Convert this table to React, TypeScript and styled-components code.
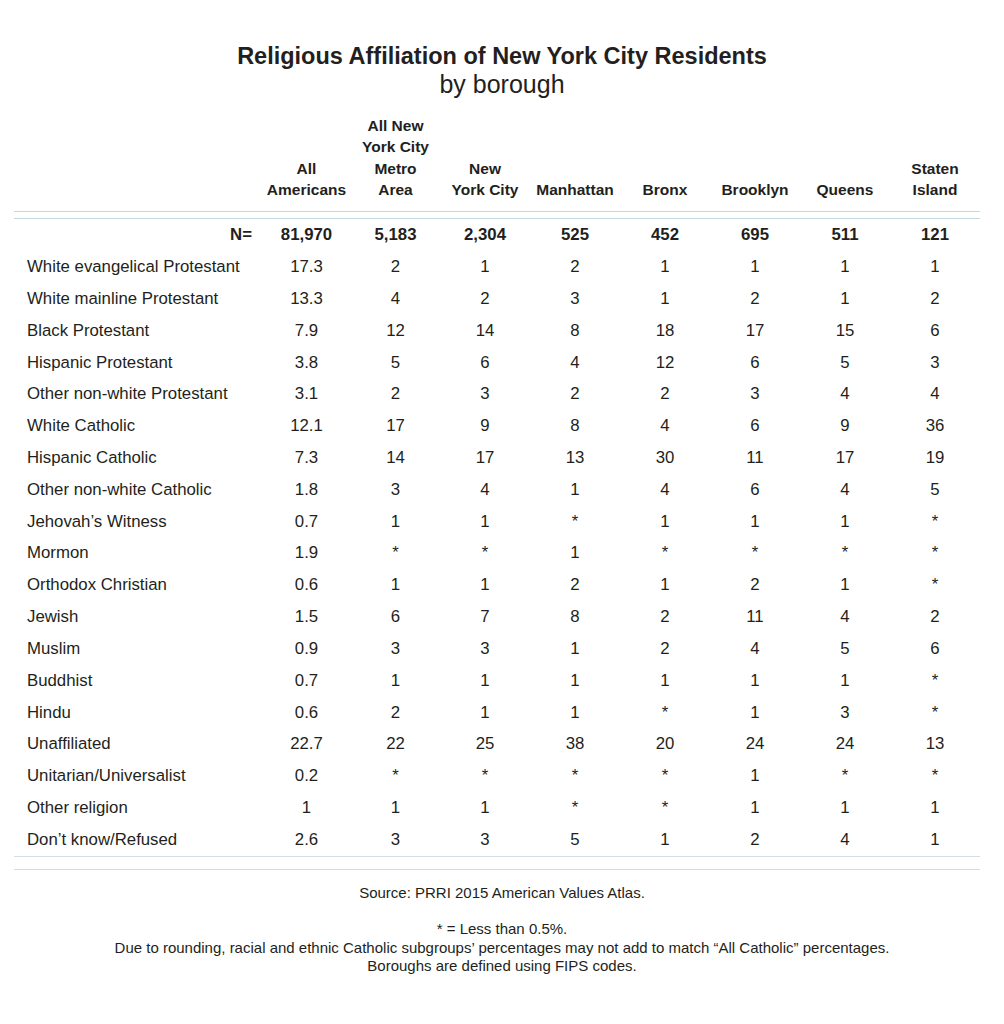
import React from "react";
import styled, { createGlobalStyle } from "styled-components";

const GlobalStyle = createGlobalStyle`
  html, body {
    margin: 0;
    padding: 0;
    background: #ffffff;
  }
  body {
    font-family: "Liberation Sans", Arial, Helvetica, sans-serif;
    color: #231f20;
  }
`;

const Page = styled.div`
  width: 1004px;
  padding-top: 42px;
  box-sizing: border-box;
`;

const Title = styled.h1`
  margin: 0;
  text-align: center;
  font-size: 23.5px;
  font-weight: 700;
  line-height: 28px;
`;

const Subtitle = styled.div`
  text-align: center;
  font-size: 25px;
  font-weight: 400;
  line-height: 28px;
`;

const Table = styled.div`
  margin: 17px 0 0 14px;
  width: 966px;
`;

const Row = styled.div<{ $head?: boolean; $total?: boolean; $last?: boolean }>`
  display: grid;
  grid-template-columns: 248px 89px 89px repeat(6, 90px);
  align-items: ${(p) => (p.$head ? "end" : "center")};
  font-weight: ${(p) => (p.$head || p.$total ? 700 : 400)};
  font-size: ${(p) => (p.$head ? "15.5px" : "16.8px")};
  line-height: ${(p) => (p.$head ? "21.3px" : "31.83px")};
  padding-bottom: ${(p) => (p.$head ? "11px" : "0")};
  border-bottom: ${(p) =>
    p.$head ? "1px solid #c4d9df" : p.$last ? "1px solid #d3dde4" : "none"};
  border-top: ${(p) => (p.$total ? "1px solid #c4d9df" : "none")};
  margin-top: ${(p) => (p.$total ? "6px" : "0")};
`;

const Label = styled.div<{ $right?: boolean }>`
  padding-left: ${(p) => (p.$right ? "0" : "13px")};
  padding-right: ${(p) => (p.$right ? "10px" : "0")};
  text-align: ${(p) => (p.$right ? "right" : "left")};
  white-space: nowrap;
`;

const Cell = styled.div`
  text-align: center;
  white-space: pre-line;
`;

const BottomRule = styled.div`
  margin-top: 12px;
  height: 0;
  border-top: 1px solid #d3dde4;
`;

const Footer = styled.div`
  margin-top: 14px;
  text-align: center;
  font-size: 15px;
  line-height: 18.3px;
  color: #231f20;
`;

const FootLine = styled.div<{ $gap?: boolean }>`
  margin-top: ${(p) => (p.$gap ? "18.3px" : "0")};
`;

const headers = [
  "All\nAmericans",
  "All New\nYork City\nMetro\nArea",
  "New\nYork City",
  "Manhattan",
  "Bronx",
  "Brooklyn",
  "Queens",
  "Staten\nIsland",
];

const totals = ["81,970", "5,183", "2,304", "525", "452", "695", "511", "121"];

const rows: [string, string[]][] = [
  ["White evangelical Protestant", ["17.3", "2", "1", "2", "1", "1", "1", "1"]],
  ["White mainline Protestant", ["13.3", "4", "2", "3", "1", "2", "1", "2"]],
  ["Black Protestant", ["7.9", "12", "14", "8", "18", "17", "15", "6"]],
  ["Hispanic Protestant", ["3.8", "5", "6", "4", "12", "6", "5", "3"]],
  ["Other non-white Protestant", ["3.1", "2", "3", "2", "2", "3", "4", "4"]],
  ["White Catholic", ["12.1", "17", "9", "8", "4", "6", "9", "36"]],
  ["Hispanic Catholic", ["7.3", "14", "17", "13", "30", "11", "17", "19"]],
  ["Other non-white Catholic", ["1.8", "3", "4", "1", "4", "6", "4", "5"]],
  ["Jehovah\u2019s Witness", ["0.7", "1", "1", "*", "1", "1", "1", "*"]],
  ["Mormon", ["1.9", "*", "*", "1", "*", "*", "*", "*"]],
  ["Orthodox Christian", ["0.6", "1", "1", "2", "1", "2", "1", "*"]],
  ["Jewish", ["1.5", "6", "7", "8", "2", "11", "4", "2"]],
  ["Muslim", ["0.9", "3", "3", "1", "2", "4", "5", "6"]],
  ["Buddhist", ["0.7", "1", "1", "1", "1", "1", "1", "*"]],
  ["Hindu", ["0.6", "2", "1", "1", "*", "1", "3", "*"]],
  ["Unaffiliated", ["22.7", "22", "25", "38", "20", "24", "24", "13"]],
  ["Unitarian/Universalist", ["0.2", "*", "*", "*", "*", "1", "*", "*"]],
  ["Other religion", ["1", "1", "1", "*", "*", "1", "1", "1"]],
  ["Don\u2019t know/Refused", ["2.6", "3", "3", "5", "1", "2", "4", "1"]],
];

export default function App() {
  return (
    <Page>
      <GlobalStyle />
      <Title>Religious Affiliation of New York City Residents</Title>
      <Subtitle>by borough</Subtitle>
      <Table>
        <Row $head>
          <Label />
          {headers.map((h) => (
            <Cell key={h}>{h}</Cell>
          ))}
        </Row>
        <Row $total>
          <Label $right>N=</Label>
          {totals.map((t, i) => (
            <Cell key={i}>{t}</Cell>
          ))}
        </Row>
        {rows.map(([label, vals], idx) => (
          <Row key={label} $last={idx === rows.length - 1}>
            <Label>{label}</Label>
            {vals.map((v, i) => (
              <Cell key={i}>{v}</Cell>
            ))}
          </Row>
        ))}
        <BottomRule />
      </Table>
      <Footer>
        <FootLine>Source: PRRI 2015 American Values Atlas.</FootLine>
        <FootLine $gap>* = Less than 0.5%.</FootLine>
        <FootLine>
          Due to rounding, racial and ethnic Catholic subgroups’ percentages may not add to match “All Catholic” percentages.
        </FootLine>
        <FootLine>Boroughs are defined using FIPS codes.</FootLine>
      </Footer>
    </Page>
  );
}
